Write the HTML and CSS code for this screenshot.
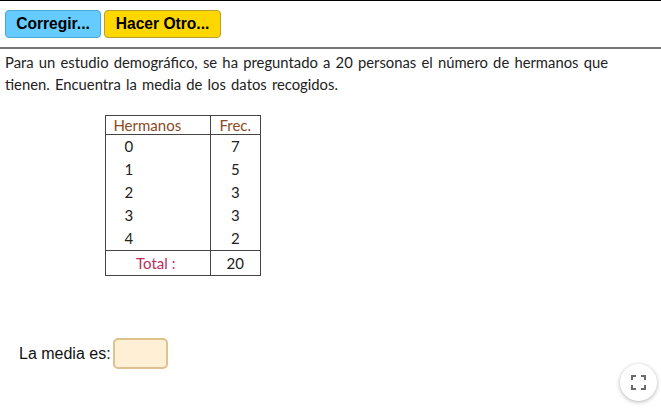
FILE: index.html
```html
<!DOCTYPE html>
<html lang="es">
<head>
    <meta charset="UTF-8">
    <meta name="viewport" content="width=device-width, initial-scale=1.0">
    <title>Media</title>
    <link rel="stylesheet" href="styles.css">
</head>
<body>

    <div class="toolbar">
        <button class="btn btn-blue">Corregir...</button>
        <button class="btn btn-yellow">Hacer Otro...</button>
    </div>

    <p class="question">Para un estudio demográfico, se ha preguntado a 20 personas el número de hermanos que tienen. Encuentra la media de los datos recogidos.</p>

    <table class="data">
        <thead>
            <tr>
                <th class="col-a">Hermanos</th>
                <th class="col-b">Frec.</th>
            </tr>
        </thead>
        <tbody>
            <tr><td class="value">0</td><td>7</td></tr>
            <tr><td class="value">1</td><td>5</td></tr>
            <tr><td class="value">2</td><td>3</td></tr>
            <tr><td class="value">3</td><td>3</td></tr>
            <tr><td class="value">4</td><td>2</td></tr>
        </tbody>
        <tfoot>
            <tr>
                <td class="total">Total :</td>
                <td>20</td>
            </tr>
        </tfoot>
    </table>

    <div class="answer">
        <label for="media">La media es:</label>
        <input id="media" type="text">
    </div>

    <!-- Fullscreen button -->
    <div class="fullscreen">
        <svg width="15" height="15" viewBox="0 0 15 15">
            <path d="M1 5V1H5M10 1H14V5M14 10V14H10M5 14H1V10" fill="none" stroke="#6b6b6b" stroke-width="2"/>
        </svg>
    </div>

</body>
</html>
```

FILE: styles.css
```css
html, body {
    height: 100%;
}
body {
    margin: 0;
    background: #fff;
    font-family: Lato, sans-serif;
    color: #222;
    overflow: hidden;
}

/* Top bar */
.toolbar {
    display: flex;
    gap: 3px;
    padding: 9px 0 0 5px;
    box-sizing: border-box;
    border-top: 1px solid #000;
    border-bottom: 2px solid #777;
    height: 49px;
}
.btn {
    height: 28px;
    padding: 0;
    font-family: "Liberation Sans", Arial, sans-serif;
    font-size: 15.6px;
    font-weight: bold;
    color: #000;
    border-radius: 4px;
    cursor: pointer;
}
.btn-blue {
    width: 96px;
    background: #66ccff;
    border: 1px solid #4da6d9;
}
.btn-yellow {
    width: 117px;
    background: #ffd700;
    border: 1px solid #b8a030;
}

.question {
    width: 603px;
    margin: 2px 0 0 5px;
    font-size: 14.8px;
    line-height: 22px;
    word-spacing: 1.4px;
    text-align: justify;
}

/* Data table */
.data {
    width: 156px;
    margin: 20px 0 0 105px;
    border-collapse: collapse;
    border: 1px solid #444;
    font-size: 15px;
}
.data th, .data td {
    height: 21px;
    padding: 0 0 2px;
    text-align: center;
    font-weight: normal;
    border-left: 1px solid #444;
}
.data thead th {
    height: 18px;
    padding: 0;
    color: #8b4a22;
    border-bottom: 1px solid #444;
}
.data thead .col-a {
    padding-right: 21px;
}
.data tfoot td {
    height: 24px;
    padding: 0;
    border-top: 1px solid #444;
}
.col-a {
    width: 83px;
}
.col-b {
    width: 50px;
}
.data .value {
    padding-right: 58px;
}
.data tfoot .total {
    padding-right: 4px;
    color: #c02c5c;
}

/* Answer row */
.answer {
    display: flex;
    align-items: center;
    gap: 2px;
    margin: 62px 0 0 19px;
    font-family: "Liberation Sans", Arial, sans-serif;
    font-size: 16px;
    color: #111;
}
.answer input {
    width: 55px;
    height: 31px;
    padding: 0;
    box-sizing: border-box;
    background: #ffefd5;
    border: 2px solid #dfc08f;
    border-radius: 5px;
}

.fullscreen {
    position: absolute;
    left: 620px;
    top: 364px;
    width: 37px;
    height: 37px;
    display: flex;
    align-items: center;
    justify-content: center;
    background: #fff;
    border-radius: 50%;
    box-shadow: 0 1px 4px rgba(0, 0, 0, 0.3);
}
```
